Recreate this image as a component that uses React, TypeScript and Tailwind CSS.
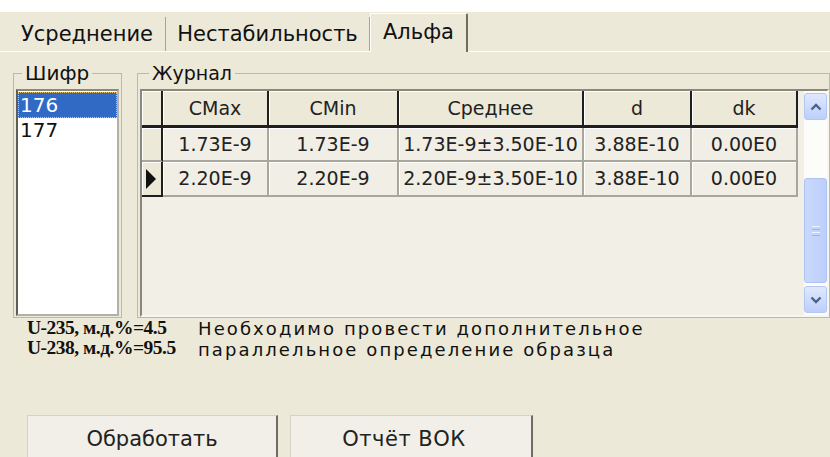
import React from "react";

type Col = { title: string; w: string };

const cols: Col[] = [
  { title: "CMax", w: "w-[106px]" },
  { title: "CMin", w: "w-[130px]" },
  { title: "Среднее", w: "w-[185px]" },
  { title: "d", w: "w-[108px]" },
  { title: "dk", w: "w-[106px]" },
];

const rows: string[][] = [
  ["1.73E-9", "1.73E-9", "1.73E-9±3.50E-10", "3.88E-10", "0.00E0"],
  ["2.20E-9", "2.20E-9", "2.20E-9±3.50E-10", "3.88E-10", "0.00E0"],
];

function Chevron({ up }: { up: boolean }) {
  return (
    <svg width="12" height="8" viewBox="0 0 12 8">
      <polyline
        points={up ? "1.5,6.5 6,2 10.5,6.5" : "1.5,1.5 6,6 10.5,1.5"}
        fill="none"
        stroke="#4d6185"
        strokeWidth="2.4"
      />
    </svg>
  );
}

function ScrollButton({ up }: { up: boolean }) {
  return (
    <div className="h-[27px] flex items-center justify-center rounded-[3px] border border-[#b4c6f2] bg-gradient-to-b from-[#dfe8fe] to-[#bccffa]">
      <Chevron up={up} />
    </div>
  );
}

function Scrollbar() {
  return (
    <div className="w-[23px] flex flex-col pt-[2px] pb-[2px] bg-[#fcfcf9]">
      <ScrollButton up />
      <div className="flex-1 flex flex-col">
        <div className="mt-auto mb-[3px] h-[105px] rounded-[3px] border border-[#aec3f4] bg-gradient-to-r from-[#c9d9fd] to-[#bccffb] flex flex-col items-center justify-center gap-[2px]">
          <div className="w-[8px] h-px bg-[#eef3ff]" />
          <div className="w-[8px] h-px bg-[#9fb6ee]" />
          <div className="w-[8px] h-px bg-[#eef3ff]" />
          <div className="w-[8px] h-px bg-[#9fb6ee]" />
        </div>
      </div>
      <ScrollButton up={false} />
    </div>
  );
}

function Journal() {
  return (
    <div className="flex-1 flex border-2 border-t-[#8a887c] border-l-[#8a887c] border-r-[#f7f6f0] border-b-[#f7f6f0] bg-[#f1efe6]">
      <div className="w-[656px] flex flex-col">
        {/* header */}
        <div className="flex h-[37px]">
          <div className="w-[21px] bg-[#ece9d8] border-r-2 border-b-[3px] border-[#1f1f1f] shadow-[inset_1px_1px_0_#ffffff]" />
          {cols.map((c) => (
            <div
              key={c.title}
              className={`${c.w} flex items-center justify-center bg-[#ece9d8] border-r-2 border-b-[3px] border-[#1f1f1f] shadow-[inset_1px_1px_0_#ffffff] text-[#222]`}
            >
              {c.title}
            </div>
          ))}
        </div>
        {rows.map((r, i) => (
          <div key={i} className={`flex ${i === 0 ? "h-[34px]" : "h-[35px]"}`}>
            <div
              className={`w-[21px] flex items-center pl-[4px] bg-[#ece9d8] border-r-2 border-[#1f1f1f] shadow-[inset_1px_1px_0_#ffffff] ${
                i === 1 ? "border-b-2 border-b-[#1f1f1f]" : "border-b-2 border-b-[#a9a79a]"
              }`}
            >
              {i === 1 && (
                <svg width="10" height="20" viewBox="0 0 10 20">
                  <polygon points="0,0 10,10 0,20" fill="#111" />
                </svg>
              )}
            </div>
            {r.map((v, j) => (
              <div
                key={j}
                className={`${cols[j].w} flex items-center justify-center bg-[#f0eee5] border-r-2 border-b-2 border-[#a9a79a] shadow-[inset_1px_1px_0_#ffffff] text-[#222]`}
              >
                {v}
              </div>
            ))}
          </div>
        ))}
      </div>
      <div className="flex-1" />
      <Scrollbar />
    </div>
  );
}

function Tab({ label, w, pl }: { label: string; w: string; pl: string }) {
  return (
    <div className={`${w} flex flex-col`}>
      <div className={`flex-1 mt-[5px] pt-[5px] ${pl} flex justify-center border-r border-[#a7a493]`}>
        <span className="leading-[24px] text-[21px]">{label}</span>
      </div>
      <div className="h-px bg-white" />
    </div>
  );
}

export default function App() {
  return (
    <div className="w-[830px] h-[457px] overflow-hidden bg-[#ece9d8] text-[19px] text-[#111] font-['DejaVu_Sans',Verdana,sans-serif] flex flex-col">
      <div className="h-[12px] shrink-0 bg-white" />

      {/* tab strip */}
      <div className="h-[40px] shrink-0 flex">
        <Tab label="Усреднение" w="w-[166px]" pl="pl-[9px]" />
        <Tab label="Нестабильность" w="w-[204px]" pl="pl-0" />
        <div className="w-[98px] mt-px flex justify-center pt-[6px] border-l border-t border-white border-r-2 border-r-[#6f6d62] rounded-tr-[2px]">
          <span className="leading-[24px] text-[21px]">Альфа</span>
        </div>
        <div className="flex-1 flex flex-col">
          <div className="flex-1" />
          <div className="h-px bg-white" />
        </div>
      </div>

      {/* page body */}
      <div className="flex-1 flex flex-col">
        <div className="mt-[11px] h-[255px] flex">
          <fieldset className="ml-[13px] w-[109px] flex flex-col border border-[#bcb9a9] pl-[2px] pr-[2px] pt-[6px] pb-px">
            <legend className="ml-[6px] px-[3px] leading-[20px] text-[20px]">Шифр</legend>
            <div className="flex-1 bg-white border-2 border-t-[#8a887c] border-l-[#5f5e56] border-r-[#b3b1a5] border-b-[#b3b1a5] pt-px text-[20px]">
              <div className="h-[26px] leading-[26px] pl-[2px] bg-[#316ac5] text-white outline-1 outline-dotted outline-[#f2c96a] -outline-offset-1">
                176
              </div>
              <div className="h-[25px] leading-[25px] pl-[2px]">177</div>
            </div>
          </fieldset>

          <fieldset className="ml-[15px] flex-1 flex flex-col border border-[#bcb9a9] pl-[2px] pt-[6px]">
            <legend className="ml-[9px] px-[3px] leading-[20px]">Журнал</legend>
            <Journal />
          </fieldset>
        </div>

        {/* isotope summary */}
        <div className="flex">
          <div className="ml-[27px] w-[171px] font-['Liberation_Serif','Times_New_Roman',serif] font-bold text-[19.5px] leading-[20px] tracking-[-0.5px]">
            <div>U-235, м.д.%=4.5</div>
            <div>U-238, м.д.%=95.5</div>
          </div>
          <p className="text-[18px] leading-[21px] tracking-[2.1px]">
            Необходимо провести дополнительное
            <br />
            параллельное определение образца
          </p>
        </div>

        {/* actions */}
        <div className="mt-[55px] flex text-[21px]">
          <button className="ml-[27px] w-[251px] h-[48px] shrink-0 flex items-center justify-center bg-[#f1efe7] border-t border-l border-[#d6d3c4] border-r-2 border-r-[#6f6d62] text-[#222]">
            Обработать
          </button>
          <button className="ml-[12px] w-[243px] h-[48px] shrink-0 flex items-center justify-center pr-[14px] bg-[#f1efe7] border-t border-l border-[#d6d3c4] border-r-2 border-r-[#6f6d62] text-[#222] tracking-[0.5px]">
            Отчёт ВОК
          </button>
        </div>
      </div>
    </div>
  );
}
